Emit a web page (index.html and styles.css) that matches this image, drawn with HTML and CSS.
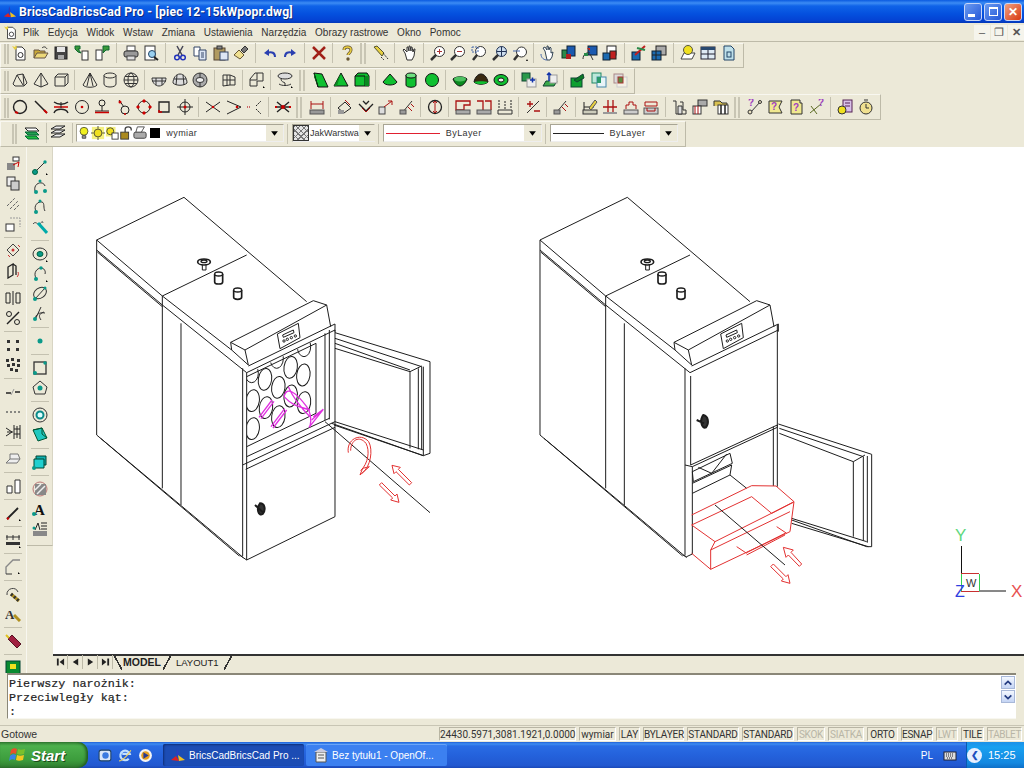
FILE: index.html
```html
<!DOCTYPE html>
<html lang="pl">
<head>
<meta charset="utf-8">
<title>BricsCad</title>
<link rel="stylesheet" href="styles.css">
</head>
<body>
<svg class="defs" xmlns="http://www.w3.org/2000/svg">
<symbol id="logo" viewBox="0 0 16 16"><path d="M7 1l2 6-3 3z" fill="#2a3fc0"/><path d="M1 13l5-4 3 5z" fill="#e02020"/><path d="M8 8l7 5-6 1z" fill="#f0c020"/></symbol>
<symbol id="new" viewBox="0 0 16 16"><path d="M4 2h6l3 3v10H4z" fill="#fff" stroke="#333"/><circle cx="8.500" cy="10" r="2.500" fill="none" stroke="#333"/><path d="M0 1l3 1 1-2 1 3-2 2z" fill="#e8d040"/></symbol>
<symbol id="open" viewBox="0 0 16 16"><path d="M1 13V5h5l1 1h5v2" fill="#c8a838" stroke="#654"/><path d="M1 13l3-5h11l-3 5z" fill="#ecd878" stroke="#654"/><path d="M9 3c2-2 4-1 5 1" fill="none" stroke="#333"/></symbol>
<symbol id="save" viewBox="0 0 16 16"><rect x="2" y="2" width="12" height="12" fill="#444" stroke="#222"/><rect x="4" y="2" width="8" height="5" fill="#e6e6e6"/><rect x="5" y="10" width="6" height="4" fill="#aaa"/></symbol>
<symbol id="tr1" viewBox="0 0 16 16"><rect x="8" y="6" width="6" height="9" fill="#fff" stroke="#333"/><path d="M1 1h5v3H4l3 4-3-1-3-3z" fill="#3a9a3a" stroke="#163"/></symbol>
<symbol id="tr2" viewBox="0 0 16 16"><rect x="2" y="5" width="6" height="10" fill="#fff" stroke="#333"/><path d="M9 1h6v4h-3l-3 3z" fill="#3a9a3a" stroke="#163"/></symbol>
<symbol id="print" viewBox="0 0 16 16"><rect x="4" y="1" width="8" height="5" fill="#fff" stroke="#444"/><rect x="1" y="6" width="14" height="6" rx="2" fill="#999" stroke="#333"/><rect x="4" y="11" width="8" height="4" fill="#ddd" stroke="#444"/></symbol>
<symbol id="prev" viewBox="0 0 16 16"><rect x="2" y="1" width="10" height="14" fill="#fff" stroke="#333"/><circle cx="9" cy="9" r="3.500" fill="#9ad0f0" stroke="#246"/><path d="M11 12l4 3" stroke="#222" stroke-width="2"/></symbol>
<symbol id="cut" viewBox="0 0 16 16"><path d="M5 1l5 9M11 1l-5 9" stroke="#445" stroke-width="1.500"/><circle cx="5" cy="12.500" r="2.300" fill="none" stroke="#23b" stroke-width="1.500"/><circle cx="11" cy="12.500" r="2.300" fill="none" stroke="#23b" stroke-width="1.500"/></symbol>
<symbol id="copy" viewBox="0 0 16 16"><path d="M2 2h6v9H2z" fill="#fff" stroke="#346"/><path d="M7 5h7v10H7z" fill="#dde6f5" stroke="#346"/><path d="M9 8h3M9 10h3M9 12h3" stroke="#346"/></symbol>
<symbol id="paste" viewBox="0 0 16 16"><rect x="1" y="3" width="11" height="12" fill="#b09a60" stroke="#543"/><rect x="4" y="1" width="5" height="3" fill="#888" stroke="#333"/><rect x="7" y="7" width="8" height="8" fill="#dde6f5" stroke="#346"/></symbol>
<symbol id="brush" viewBox="0 0 16 16"><path d="M1 10l5-5 5 5-4 4z" fill="#f0e090" stroke="#653"/><path d="M8 5l4-4 3 3-4 4z" fill="#777" stroke="#333"/></symbol>
<symbol id="undo" viewBox="0 0 16 16"><path d="M13 12c0-4-3-6-8-4" fill="none" stroke="#2a3fb0" stroke-width="2"/><path d="M7 4L2 8l5 3z" fill="#2a3fb0"/></symbol>
<symbol id="redo" viewBox="0 0 16 16"><path d="M3 12c0-4 3-6 8-4" fill="none" stroke="#2a3fb0" stroke-width="2"/><path d="M9 4l5 4-5 3z" fill="#2a3fb0"/></symbol>
<symbol id="del" viewBox="0 0 16 16"><path d="M2 2l12 12M14 2L2 14" stroke="#a02018" stroke-width="2.500"/></symbol>
<symbol id="help" viewBox="0 0 16 16"><path d="M5 5c0-4 7-4 7 0 0 3-3 3-3 5" fill="none" stroke="#653" stroke-width="3"/><path d="M5 5c0-4 7-4 7 0 0 3-3 3-3 5" fill="none" stroke="#ecd040" stroke-width="1.500"/><circle cx="9" cy="14" r="1.700" fill="#653"/></symbol>
<symbol id="pencil" viewBox="0 0 16 16"><path d="M1 2l3-1 7 7-2 3z" fill="#e8d040" stroke="#553"/><path d="M10 8l5 6M8 12l3 3" stroke="#333" stroke-dasharray="2 1"/></symbol>
<symbol id="hand" viewBox="0 0 16 16"><path d="M4 8L2 5l1-1 3 3V2h1l1 4V1h1l1 5V2h1l1 5 1-3h1l-1 7-2 4H6z" fill="#fff" stroke="#333"/></symbol>
<symbol id="zp" viewBox="0 0 16 16"><circle cx="9.500" cy="6.500" r="5" fill="#fff" stroke="#333"/><path d="M7 6.500h5M9.500 4v5" stroke="#a33"/><path d="M6 10l-5 5" stroke="#333" stroke-width="2.500"/></symbol>
<symbol id="zm" viewBox="0 0 16 16"><circle cx="9.500" cy="6.500" r="5" fill="#fff" stroke="#333"/><path d="M7 6.500h5" stroke="#a33"/><path d="M6 10l-5 5" stroke="#333" stroke-width="2.500"/></symbol>
<symbol id="zw" viewBox="0 0 16 16"><circle cx="9.500" cy="6.500" r="5" fill="#fff" stroke="#333"/><path d="M1 2h6v5H1z" fill="none" stroke="#46a" stroke-dasharray="2 1"/><path d="M6 10l-4 5" stroke="#333" stroke-width="2.500"/></symbol>
<symbol id="za" viewBox="0 0 16 16"><circle cx="9.500" cy="6.500" r="5" fill="#cde" stroke="#235"/><path d="M9.500 1.500v10M4.500 6.500h10" stroke="#235"/><path d="M6 10l-5 5" stroke="#333" stroke-width="2.500"/></symbol>
<symbol id="zb" viewBox="0 0 16 16"><circle cx="9.500" cy="7" r="5" fill="#fff" stroke="#333"/><path d="M1 6h7" stroke="#46a"/><path d="M6 10l-4 5" stroke="#333" stroke-width="2.500"/><path d="M15 14l1 2h-2z" fill="#000"/></symbol>
<symbol id="orb" viewBox="0 0 16 16"><path d="M5 6L3 3l2-1 2 3V1h1l1 4 1-3 1 1v5l2-1-1 5-2 3H7z" fill="#fff" stroke="#345"/><path d="M1 9c0 4 3 6 6 6" fill="none" stroke="#46a"/></symbol>
<symbol id="c1" viewBox="0 0 16 16"><rect x="1" y="5" width="6" height="8" fill="#2a8a4a" stroke="#132"/><rect x="6" y="1" width="8" height="10" fill="#1c5ab0" stroke="#123"/><rect x="5" y="9" width="5" height="5" fill="#b02020"/></symbol>
<symbol id="c2" viewBox="0 0 16 16"><rect x="6" y="1" width="9" height="9" fill="#1c5ab0" stroke="#123"/><path d="M5 3l3 0v3z" fill="#c02020"/><path d="M1 14c0-5 4-7 7-6M8 9l3 6" fill="none" stroke="#333"/><rect x="2" y="8" width="4" height="3" fill="#2a8a4a"/></symbol>
<symbol id="c3" viewBox="0 0 16 16"><rect x="5" y="1" width="9" height="9" fill="#fff" stroke="#222"/><rect x="1" y="8" width="7" height="7" fill="#1c6ab0" stroke="#123"/><rect x="8" y="6" width="6" height="8" fill="#c02020" stroke="#222"/></symbol>
<symbol id="c4" viewBox="0 0 16 16"><rect x="1" y="7" width="8" height="8" fill="#1c6ab0" stroke="#123"/><path d="M4 10L14 1" stroke="#c02020" stroke-width="2"/><path d="M6 3l8 2" stroke="#2a8a4a" stroke-width="2"/></symbol>
<symbol id="c5" viewBox="0 0 16 16"><rect x="5" y="1" width="10" height="9" fill="#aaa" stroke="#222"/><rect x="1" y="6" width="9" height="9" fill="#1c6ab0" stroke="#123"/><path d="M1 10h9M5 6v9" stroke="#222"/></symbol>
<symbol id="sun" viewBox="0 0 16 16"><path d="M1 14l3-6h11l-3 6z" fill="#fff" stroke="#444"/><circle cx="8" cy="5" r="4.500" fill="#f0e020" stroke="#554"/></symbol>
<symbol id="tbl" viewBox="0 0 16 16"><rect x="1" y="2" width="14" height="12" fill="#dfeaf4" stroke="#223"/><rect x="1" y="2" width="14" height="3" fill="#2a4a70"/><path d="M1 9h14M8 5v9" stroke="#223"/></symbol>
<symbol id="docb" viewBox="0 0 16 16"><path d="M3 1h7l3 3v11H3z" fill="#bfe0ea" stroke="#246"/><rect x="6" y="7" width="4" height="5" fill="none" stroke="#246"/></symbol>
<symbol id="wedge" viewBox="0 0 16 16"><path d="M1 12l4-9 6-1 4 9-3 3H3zM5 3l6 10M11 2l1 12" fill="none" stroke="#333"/></symbol>
<symbol id="pyr" viewBox="0 0 16 16"><path d="M8 1l7 11-7 3-7-3zM8 1v14" fill="none" stroke="#333"/></symbol>
<symbol id="box" viewBox="0 0 16 16"><path d="M2 5l3-3h10v9l-3 3H2zM2 5h10v9M12 5l3-3" fill="none" stroke="#333"/></symbol>
<symbol id="cone" viewBox="0 0 16 16"><path d="M8 1L1 13c2 3 12 3 14 0zM8 1L5 14M8 1l3 13" fill="none" stroke="#333"/></symbol>
<symbol id="cyl" viewBox="0 0 16 16"><ellipse cx="8" cy="3.500" rx="6" ry="2.500" fill="none" stroke="#333"/><path d="M2 3.500V12c0 4 12 4 12 0V3.500" fill="none" stroke="#333"/></symbol>
<symbol id="sph" viewBox="0 0 16 16"><circle cx="8" cy="8" r="7" fill="none" stroke="#333"/><ellipse cx="8" cy="8" rx="3" ry="7" fill="none" stroke="#333"/><path d="M1 8h14M2 4.500h12M2 11.500h12" stroke="#333"/></symbol>
<symbol id="dish" viewBox="0 0 16 16"><path d="M1 6c0 4 3 8 7 8s7-4 7-8zM5 6v7M11 6v7M1 9h14" fill="#ddd" stroke="#333"/></symbol>
<symbol id="dome" viewBox="0 0 16 16"><path d="M1 11c0-5 3-9 7-9s7 4 7 9c-3 3-11 3-14 0zM5 3l-1 10M11 3l1 10M2 7h12" fill="#ddd" stroke="#333"/></symbol>
<symbol id="tor" viewBox="0 0 16 16"><circle cx="8" cy="8" r="7" fill="#aaa" stroke="#333"/><ellipse cx="8" cy="8" rx="4" ry="2.500" fill="#eee" stroke="#333"/><path d="M8 1v4M8 11v4" stroke="#333"/></symbol>
<symbol id="mesh" viewBox="0 0 16 16"><path d="M2 3h7l5 2v8H9l-7 1zM9 3v10M2 8h12M6 3v11" fill="none" stroke="#333"/></symbol>
<symbol id="edge" viewBox="0 0 16 16"><path d="M1 14V7l5-6h8v8H8v5zM1 8h7V1" fill="none" stroke="#333"/><path d="M14 14l2 2h-2z" fill="#000"/></symbol>
<symbol id="sdl" viewBox="0 0 16 16"><ellipse cx="8" cy="4" rx="7" ry="3" fill="#ddd" stroke="#333"/><path d="M4 7c0 3 3 3 4 4v3M2 12c3 2 9 2 12 0" fill="none" stroke="#333"/><path d="M14 14l2 2h-2z" fill="#000"/></symbol>
<symbol id="gw" viewBox="0 0 16 16"><path d="M1 1l8 1 6 13H5z" fill="#0fc030" stroke="#111"/><path d="M1 1l4 14" stroke="#111"/><path d="M1 1v4l4 10z" fill="#086a1c"/></symbol>
<symbol id="gp" viewBox="0 0 16 16"><path d="M8 1l7 13H1z" fill="#0fc030" stroke="#111"/><path d="M8 1L4 14H1z" fill="#0a8a20"/></symbol>
<symbol id="gb" viewBox="0 0 16 16"><path d="M1 4l3-3h9l2 3v10H1z" fill="#0fc030" stroke="#111"/><path d="M1 4h10v10" fill="none" stroke="#111"/><path d="M11 4h4v10h-4z" fill="#0a8a20"/></symbol>
<symbol id="gc" viewBox="0 0 16 16"><path d="M8 2l7 8c-2 4-12 4-14 0z" fill="#0fc030" stroke="#111"/></symbol>
<symbol id="gy" viewBox="0 0 16 16"><path d="M3 3v10c0 3 10 3 10 0V3z" fill="#0fc030" stroke="#111"/><ellipse cx="8" cy="3.500" rx="5" ry="2.500" fill="#6fe080" stroke="#111"/></symbol>
<symbol id="gs" viewBox="0 0 16 16"><circle cx="8" cy="8" r="6.500" fill="#0fc030" stroke="#111"/></symbol>
<symbol id="gd" viewBox="0 0 16 16"><path d="M1 7c3-3 11-3 14 0-2 5-5 7-7 7S3 12 1 7z" fill="#0a8a20" stroke="#111"/><ellipse cx="8" cy="7" rx="6" ry="2.500" fill="#4ec060"/></symbol>
<symbol id="gm" viewBox="0 0 16 16"><path d="M1 10c1-5 4-8 7-8s6 3 7 8c-3 3-11 3-14 0z" fill="#3a2a10" stroke="#111"/><path d="M1 10c3 3 11 3 14 0-3-1-11-1-14 0z" fill="#0fc030"/></symbol>
<symbol id="gt" viewBox="0 0 16 16"><ellipse cx="8" cy="8" rx="7" ry="5.500" fill="#0fc030" stroke="#111"/><ellipse cx="8" cy="8" rx="3" ry="2" fill="#eee" stroke="#111"/></symbol>
<symbol id="s1" viewBox="0 0 16 16"><rect x="1" y="1" width="8" height="8" fill="#2a9a4a" stroke="#143"/><rect x="6" y="7" width="9" height="8" fill="#eee" stroke="#999"/><path d="M9 8h5M11.500 5.500v5" stroke="#13a" stroke-width="1.500"/></symbol>
<symbol id="s2" viewBox="0 0 16 16"><path d="M1 14l3-5h11l-3 5z" fill="#3aaa4a" stroke="#143"/><rect x="8" y="3" width="7" height="8" fill="#eee" stroke="#999"/><path d="M7 9V1M5 3l2-2 2 2" fill="none" stroke="#13a" stroke-width="1.500"/></symbol>
<symbol id="s3" viewBox="0 0 16 16"><rect x="1" y="6" width="11" height="9" fill="#0fa030" stroke="#143"/><path d="M4 8l9-6 1 4-7 4z" fill="#0c7a24" stroke="#143"/></symbol>
<symbol id="s4" viewBox="0 0 16 16"><rect x="1" y="1" width="9" height="10" fill="#bce8d8" stroke="#286"/><rect x="6" y="5" width="9" height="10" fill="#e8f4f8" stroke="#48a"/><path d="M6 5h4v6H6z" fill="#2a9a6a"/></symbol>
<symbol id="s5" viewBox="0 0 16 16"><rect x="2" y="2" width="9" height="9" fill="#ddd" stroke="#a88"/><rect x="5" y="5" width="10" height="10" fill="#f4f0e4" stroke="#ccc"/><rect x="6" y="5" width="5" height="6" fill="#5a8a40" stroke="#a33"/></symbol>
<symbol id="circ" viewBox="0 0 16 16"><circle cx="8" cy="8" r="6.500" fill="none" stroke="#222" stroke-width="1.400"/><path d="M3 13l3 1" stroke="#c00" stroke-width="2"/></symbol>
<symbol id="line" viewBox="0 0 16 16"><path d="M2 2l12 12" stroke="#222" stroke-width="1.500"/><path d="M11 11l3 3" stroke="#c00" stroke-width="2"/></symbol>
<symbol id="trim" viewBox="0 0 16 16"><path d="M1 3c4 3 10 3 14 0M1 14c2-5 12-5 14 0" fill="none" stroke="#222" stroke-width="1.400"/><path d="M1 8h14" stroke="#c00" stroke-width="1.500"/><path d="M8 3v6" stroke="#222"/></symbol>
<symbol id="ctr" viewBox="0 0 16 16"><circle cx="8" cy="8" r="6.500" fill="none" stroke="#222"/><circle cx="8" cy="8" r="1.300" fill="#c00"/></symbol>
<symbol id="pin" viewBox="0 0 16 16"><circle cx="8" cy="4" r="3" fill="none" stroke="#222"/><path d="M8 7v5M1 12h14" stroke="#222"/><path d="M1 13.500h14" stroke="#c00" stroke-width="1.500"/></symbol>
<symbol id="bend" viewBox="0 0 16 16"><circle cx="10" cy="11" r="4" fill="none" stroke="#222"/><path d="M4 1l5 7" stroke="#222"/><circle cx="5" cy="3" r="1.500" fill="#c00"/><circle cx="10" cy="15" r="1" fill="#c00"/></symbol>
<symbol id="qd" viewBox="0 0 16 16"><circle cx="8" cy="8" r="6" fill="none" stroke="#222"/><path d="M7 1h2v2H7zM7 13h2v2H7zM1 7h2v2H1zM13 7h2v2h-2z" fill="#d00" stroke="#c00"/></symbol>
<symbol id="rc" viewBox="0 0 16 16"><path d="M3 3h10v10H3z" fill="none" stroke="#222" stroke-width="1.300"/><path d="M3 11v2h3" fill="none" stroke="#c00" stroke-width="1.500"/></symbol>
<symbol id="cx" viewBox="0 0 16 16"><circle cx="8" cy="8" r="5" fill="none" stroke="#222"/><path d="M8 0v16M0 8h16" stroke="#222"/><circle cx="8" cy="8" r="1.500" fill="#c00"/></symbol>
<symbol id="xl" viewBox="0 0 16 16"><path d="M1 3l14 10M1 13L15 3" stroke="#222"/><circle cx="8" cy="8" r="1.300" fill="#c00"/></symbol>
<symbol id="yl" viewBox="0 0 16 16"><path d="M1 2l14 6L1 15" fill="none" stroke="#222"/><circle cx="11" cy="8" r="1.300" fill="#c00"/></symbol>
<symbol id="dl" viewBox="0 0 16 16"><path d="M10 7l5-5M10 10l5 5" stroke="#222" stroke-dasharray="2 1"/><path d="M1 8h3" stroke="#c66" stroke-dasharray="1 1" stroke-width="2"/></symbol>
<symbol id="star" viewBox="0 0 16 16"><path d="M2 3l12 10M14 3L2 13M1 8h14" stroke="#222" stroke-width="1.400"/><circle cx="8" cy="8" r="2" fill="#c00"/><path d="M0 8h2M14 8h2" stroke="#c00" stroke-width="2"/></symbol>
<symbol id="d1" viewBox="0 0 16 16"><rect x="1" y="11" width="14" height="4" fill="#999" stroke="#555"/><path d="M2 2v8M14 2v8M2 5h12" stroke="#a11"/></symbol>
<symbol id="d2" viewBox="0 0 16 16"><path d="M1 9l7-6 6 6-7 5z" fill="none" stroke="#222"/><rect x="1" y="11" width="6" height="4" fill="#999"/><path d="M8 1l5 5" stroke="#a11"/></symbol>
<symbol id="d3" viewBox="0 0 16 16"><path d="M1 5l7 7 7-7M5 2l3 3 3-3" fill="none" stroke="#222" stroke-width="1.300"/><path d="M4 9l4 4 4-4" fill="none" stroke="#a11"/></symbol>
<symbol id="d4" viewBox="0 0 16 16"><rect x="1" y="8" width="6" height="7" fill="#ddd" stroke="#444"/><path d="M6 8l8-6M10 2h4v4" fill="none" stroke="#a11"/></symbol>
<symbol id="d5" viewBox="0 0 16 16"><path d="M3 14L13 2" stroke="#333"/><rect x="1" y="11" width="6" height="4" fill="#999" stroke="#555"/><path d="M9 8l4 4M12 5l3 3" stroke="#a11"/></symbol>
<symbol id="d6" viewBox="0 0 16 16"><circle cx="8" cy="8" r="6.500" fill="none" stroke="#222" stroke-width="1.300"/><path d="M8 2v12M6 4l2-2 2 2M6 12l2 2 2-2" fill="none" stroke="#a11"/></symbol>
<symbol id="d7" viewBox="0 0 16 16"><path d="M1 2h14v4h-6v5H1z" fill="none" stroke="#a11" stroke-width="1.300"/><rect x="1" y="11" width="14" height="4" fill="#aaa" stroke="#555"/></symbol>
<symbol id="d8" viewBox="0 0 16 16"><path d="M1 2h6v9M9 2h6v9" fill="none" stroke="#a11" stroke-width="1.300"/><rect x="1" y="11" width="14" height="4" fill="#aaa" stroke="#555"/></symbol>
<symbol id="d9" viewBox="0 0 16 16"><path d="M2 1v9M14 1v9M8 2v8" stroke="#222" stroke-dasharray="2 1"/><path d="M1 11h14v4H1z" fill="none" stroke="#333"/></symbol>
<symbol id="pm" viewBox="0 0 16 16"><path d="M2 14L14 2" stroke="#333"/><path d="M2 5h6M5 2v6M9 12h6" stroke="#a11" stroke-width="1.300"/></symbol>
<symbol id="e1" viewBox="0 0 16 16"><rect x="1" y="11" width="14" height="4" fill="#ccb" stroke="#333"/><path d="M2 3v8M2 8h10" stroke="#222"/><path d="M7 9l6-8 2 2-6 8z" fill="#e8d040" stroke="#555"/></symbol>
<symbol id="e2" viewBox="0 0 16 16"><path d="M6 1v14M11 1v14M1 8h14" stroke="#a11" stroke-width="1.300"/><rect x="1" y="13" width="14" height="2" fill="#999"/></symbol>
<symbol id="e3" viewBox="0 0 16 16"><path d="M3 10V6h3V3h4v3h3v4" fill="none" stroke="#a11"/><rect x="1" y="11" width="14" height="4" fill="#ccc" stroke="#555"/></symbol>
<symbol id="e4" viewBox="0 0 16 16"><path d="M2 3h12v4H2z" fill="none" stroke="#a11"/><rect x="1" y="9" width="14" height="6" fill="#ccc" stroke="#555"/><path d="M4 9v3h8V9" fill="none" stroke="#a11"/></symbol>
<symbol id="e5" viewBox="0 0 16 16"><path d="M1 2h3v13h10v-4h-3V3H8" fill="none" stroke="#333"/><path d="M6 7h4v8H6z" fill="#ddd" stroke="#333"/></symbol>
<symbol id="e6" viewBox="0 0 16 16"><rect x="6" y="1" width="9" height="6" fill="#aaa" stroke="#333"/><rect x="1" y="7" width="8" height="8" fill="#fff" stroke="#333"/><path d="M3 7v8M6 7v8" stroke="#a11"/></symbol>
<symbol id="e7" viewBox="0 0 16 16"><path d="M1 7V2h6l2 2h5v2" fill="#d8c050" stroke="#333"/><rect x="5" y="6" width="10" height="9" fill="#fff" stroke="#333"/><path d="M8 6v9M12 6v9" stroke="#222" stroke-width="1.500"/></symbol>
<symbol id="q1" viewBox="0 0 16 16"><path d="M3 14L14 2" stroke="#333"/><circle cx="3" cy="13" r="2" fill="#e8e0c0" stroke="#333"/><circle cx="13" cy="3" r="1.500" fill="#e8e0c0" stroke="#333"/><text x="1" y="7" class="qm">?</text></symbol>
<symbol id="q2" viewBox="0 0 16 16"><path d="M1 2h13l-3 6 3 6H1z" fill="#f0e890" stroke="#333"/><text x="3" y="11" class="qm">?</text></symbol>
<symbol id="q3" viewBox="0 0 16 16"><path d="M3 1h9v3h2v11H3z" fill="#f0e890" stroke="#333"/><text x="5" y="12" class="qm">?</text></symbol>
<symbol id="q4" viewBox="0 0 16 16"><path d="M1 14L12 5M2 7l6 8" stroke="#5a6a20"/><text x="9" y="7" class="qm">?</text></symbol>
<symbol id="q5" viewBox="0 0 16 16"><rect x="6" y="1" width="9" height="12" fill="#d8c0e8" stroke="#525"/><path d="M8 4h5M8 7h5" stroke="#525"/><circle cx="5" cy="11" r="4" fill="#f0e020" stroke="#333"/></symbol>
<symbol id="q6" viewBox="0 0 16 16"><circle cx="8" cy="9" r="6" fill="#f0e090" stroke="#333"/><path d="M8 5v4h3M6 1h4" fill="none" stroke="#333"/></symbol>
<symbol id="lay1" viewBox="0 0 16 16"><path d="M1 3h11l3 3H4z" fill="#fff" stroke="#222"/><path d="M1 7h11l3 3H4z" fill="#22a050" stroke="#063"/><path d="M1 11h11l3 3H4z" fill="#20c040" stroke="#063"/></symbol>
<symbol id="lay2" viewBox="0 0 16 16"><path d="M1 4l5-3h9l-5 3zM1 8l5-3h9l-5 3zM1 12l5-3h9l-5 3z" fill="#eee" stroke="#222"/></symbol>
<symbol id="bulb" viewBox="0 0 16 16"><circle cx="8" cy="6" r="4.500" fill="#f0f020" stroke="#553"/><path d="M6 11h4v3H6z" fill="#999" stroke="#444"/></symbol>
<symbol id="sun2" viewBox="0 0 16 16"><rect x="1" y="1" width="14" height="14" fill="#f4f080"/><circle cx="8" cy="8" r="4.500" fill="#f0e020" stroke="#443"/><path d="M8 0v3M8 13v3M0 8h3M13 8h3" stroke="#443"/></symbol>
<symbol id="sun3" viewBox="0 0 16 16"><rect x="1" y="1" width="11" height="11" fill="#f4f080"/><circle cx="6" cy="6" r="4" fill="#f0e020" stroke="#443"/><rect x="8" y="8" width="7" height="7" fill="#fff" stroke="#333"/></symbol>
<symbol id="lock" viewBox="0 0 16 16"><path d="M7 7V4c0-4 7-4 7 0v1" fill="none" stroke="#444" stroke-width="1.500"/><rect x="2" y="7" width="9" height="8" fill="#aa8a20" stroke="#333"/></symbol>
<symbol id="prn2" viewBox="0 0 16 16"><path d="M5 1h8L9 8H3z" fill="#fff" stroke="#444"/><rect x="1" y="7" width="14" height="7" rx="2" fill="#aaa" stroke="#333"/></symbol>
<symbol id="a1" viewBox="0 0 16 16"><rect x="8" y="1" width="6" height="4" fill="#fff" stroke="#333"/><g fill="#888"><rect x="2" y="7" width="8" height="7"/></g><path d="M8 9l6-3-1 5" fill="none" stroke="#c00"/></symbol>
<symbol id="a2" viewBox="0 0 16 16"><rect x="2" y="1" width="8" height="9" fill="#eee" stroke="#333"/><rect x="6" y="5" width="8" height="9" fill="#ccc" stroke="#333"/></symbol>
<symbol id="a3" viewBox="0 0 16 16"><path d="M2 10L10 2M5 13l8-8M9 14l5-5" stroke="#666" stroke-dasharray="3 1"/></symbol>
<symbol id="a4" viewBox="0 0 16 16"><rect x="1" y="8" width="8" height="7" fill="#fff" stroke="#333"/><path d="M5 2h10v9" fill="none" stroke="#999" stroke-dasharray="2 1"/></symbol>
<symbol id="a5" viewBox="0 0 16 16"><path d="M8 1l6 6-6 6-6-6z" fill="none" stroke="#444"/><circle cx="8" cy="7" r="1.500" fill="#c33"/><path d="M3 12l2 2M13 2l2 2" stroke="#c33"/></symbol>
<symbol id="a6" viewBox="0 0 16 16"><path d="M3 4l5-3v11l-5 3zM8 1l3 2v9" fill="none" stroke="#222" stroke-width="1.300"/><path d="M13 9c1 2 0 4-1 5" fill="none" stroke="#c33"/></symbol>
<symbol id="a7" viewBox="0 0 16 16"><path d="M1 3h4v10H1zM11 3h4v10h-4zM8 1v14" fill="none" stroke="#222"/></symbol>
<symbol id="a8" viewBox="0 0 16 16"><path d="M2 14L14 2" stroke="#222" stroke-width="1.400"/><circle cx="4" cy="4" r="2.500" fill="none" stroke="#222"/><circle cx="12" cy="12" r="2.500" fill="none" stroke="#222"/></symbol>
<symbol id="a9" viewBox="0 0 16 16"><g fill="#333"><rect x="2" y="3" width="3" height="3"/><rect x="11" y="3" width="3" height="3"/><rect x="2" y="11" width="3" height="3"/><rect x="11" y="11" width="3" height="3"/></g></symbol>
<symbol id="a10" viewBox="0 0 16 16"><g fill="#333"><rect x="1" y="2" width="3" height="3"/><rect x="6" y="1" width="3" height="3"/><rect x="12" y="2" width="3" height="3"/><rect x="2" y="7" width="3" height="3"/><rect x="7" y="6" width="3" height="3"/><rect x="12" y="7" width="3" height="3"/><rect x="5" y="11" width="3" height="3"/><rect x="10" y="12" width="3" height="3"/></g></symbol>
<symbol id="a11" viewBox="0 0 16 16"><path d="M1 9h5M10 8h5" stroke="#222" stroke-width="1.500"/><path d="M6 11l3-6" stroke="#999"/></symbol>
<symbol id="a12" viewBox="0 0 16 16"><g fill="#666"><circle cx="2" cy="8" r="1"/><circle cx="6" cy="8" r="1"/><circle cx="10" cy="8" r="1"/><circle cx="14" cy="8" r="1"/></g></symbol>
<symbol id="a13" viewBox="0 0 16 16"><path d="M1 4l6 4-6 4M2 8h6M9 1v14M12 2v12M15 1v14M9 5h6M9 10h6" fill="none" stroke="#222"/></symbol>
<symbol id="a14" viewBox="0 0 16 16"><path d="M1 12l4-4h10l-3 4zM5 8V3h8l2 5" fill="#eee" stroke="#777"/></symbol>
<symbol id="a15" viewBox="0 0 16 16"><path d="M2 8h5v7H2zM10 2h5v13h-5z" fill="#fff" stroke="#333"/></symbol>
<symbol id="a16" viewBox="0 0 16 16"><path d="M2 14L13 3" stroke="#222" stroke-width="1.800"/><path d="M2 14l2-1" stroke="#c00" stroke-width="2"/><path d="M14 14l2 2h-2z" fill="#000"/></symbol>
<symbol id="a17" viewBox="0 0 16 16"><path d="M1 5h14M2 3v5M14 3v5M8 3v5" stroke="#333"/><rect x="1" y="10" width="14" height="3" fill="#333"/><path d="M14 14l2 2h-2z" fill="#000"/></symbol>
<symbol id="a18" viewBox="0 0 16 16"><path d="M1 15V8l7-7h7" fill="none" stroke="#888" stroke-width="1.400"/><path d="M1 15h6" stroke="#333"/><path d="M13 13l2 2h-2z" fill="#000"/></symbol>
<symbol id="a19" viewBox="0 0 16 16"><path d="M2 9c-1-7 9-9 11-3" fill="none" stroke="#444"/><path d="M6 8l8 7" stroke="#b09020" stroke-width="3"/><path d="M6 8l8 7" stroke="#333" stroke-dasharray="2 2" stroke-width="3"/></symbol>
<symbol id="a20" viewBox="0 0 16 16"><text x="0" y="13" class="aa">A</text><path d="M9 9l6 6" stroke="#b09020" stroke-width="3"/></symbol>
<symbol id="a21" viewBox="0 0 16 16"><path d="M3 6l4-4 9 9-4 4z" fill="#a02040" stroke="#512"/><path d="M1 2l3 3" stroke="#e0c020" stroke-width="2"/></symbol>
<symbol id="a22" viewBox="0 0 16 16"><rect x="1" y="1" width="14" height="14" fill="#0a8a30" stroke="#043"/><rect x="5" y="4" width="6" height="5" fill="#f0e020"/></symbol>
<symbol id="t1" viewBox="0 0 16 16"><path d="M2 14L14 2" stroke="#333"/><circle cx="3" cy="13" r="2.500" fill="#0a9a8a" stroke="#064"/><circle cx="13" cy="3" r="1.700" fill="#0a9a8a"/><path d="M14 14l2 2h-2z" fill="#000"/></symbol>
<symbol id="t2" viewBox="0 0 16 16"><path d="M3 12C1 4 11 1 13 7" fill="none" stroke="#333"/><circle cx="4" cy="13" r="2" fill="#0a9a8a"/><circle cx="13" cy="12" r="2" fill="#0a9a8a"/><circle cx="8" cy="2" r="1.500" fill="#0a9a8a"/></symbol>
<symbol id="t3" viewBox="0 0 16 16"><path d="M4 12C1 7 6 2 10 3c3 1 1 6 3 9" fill="none" stroke="#333"/><circle cx="4" cy="13" r="2" fill="#0a9a8a"/><circle cx="8" cy="2" r="1.500" fill="#0a9a8a"/></symbol>
<symbol id="t4" viewBox="0 0 16 16"><path d="M1 5c3-4 5 2 7 0s2-4 3-1" fill="none" stroke="#555"/><path d="M6 4l9 10" stroke="#0aa" stroke-width="3"/></symbol>
<symbol id="t5" viewBox="0 0 16 16"><ellipse cx="8" cy="8" rx="7" ry="6" fill="none" stroke="#333"/><ellipse cx="8" cy="8" rx="3" ry="2.500" fill="#0a9a8a" stroke="#064"/><path d="M14 14l2 2h-2z" fill="#000"/></symbol>
<symbol id="t6" viewBox="0 0 16 16"><path d="M4 12C1 7 5 2 9 2c3 0 5 3 4 6" fill="none" stroke="#333"/><circle cx="4" cy="13" r="2" fill="#0a9a8a"/><circle cx="9" cy="2" r="1.700" fill="#0a9a8a"/><path d="M14 14l2 2h-2z" fill="#000"/></symbol>
<symbol id="t7" viewBox="0 0 16 16"><ellipse cx="8" cy="7" rx="7" ry="5" fill="none" stroke="#333" transform="rotate(-35 8 7)"/><path d="M3 13l10-11" stroke="#333"/><circle cx="3" cy="13" r="2" fill="#0a9a8a"/><circle cx="13" cy="2" r="1.500" fill="#0a9a8a"/></symbol>
<symbol id="t8" viewBox="0 0 16 16"><path d="M3 14L9 1M3 14c0-6 5-8 10-7M9 14c-2-3-3-6 3-8" fill="none" stroke="#333"/><circle cx="3" cy="13" r="2" fill="#0a9a8a"/></symbol>
<symbol id="t9" viewBox="0 0 16 16"><circle cx="8" cy="8" r="2.500" fill="#0a9a8a"/></symbol>
<symbol id="t10" viewBox="0 0 16 16"><rect x="2" y="2" width="12" height="12" fill="none" stroke="#333" stroke-width="1.300"/><circle cx="3" cy="13" r="2" fill="#0a9a8a"/><circle cx="13" cy="3" r="1.700" fill="#0a9a8a"/></symbol>
<symbol id="t11" viewBox="0 0 16 16"><path d="M8 1l7 6-2 7H3L1 7z" fill="none" stroke="#333"/><circle cx="8" cy="8" r="2.500" fill="#0a9a8a"/></symbol>
<symbol id="t12" viewBox="0 0 16 16"><circle cx="8" cy="8" r="7" fill="none" stroke="#333"/><circle cx="8" cy="8" r="3.500" fill="#dff" stroke="#0a8a8a" stroke-width="2"/></symbol>
<symbol id="t13" viewBox="0 0 16 16"><path d="M1 3l9-2 5 10-9 3z" fill="#20c8c0" stroke="#053"/><path d="M1 3l9-2v6l5 4" fill="none" stroke="#053"/></symbol>
<symbol id="t14" viewBox="0 0 16 16"><path d="M4 2h10v9H4z" fill="#10b0b0" stroke="#043"/><path d="M2 5h10v9H2z" fill="#20d0d0" stroke="#043"/><circle cx="2" cy="14" r="2" fill="#0a9a8a"/></symbol>
<symbol id="t15" viewBox="0 0 16 16"><circle cx="8" cy="8" r="7" fill="none" stroke="#b77"/><path d="M3 3h11v11H3z" fill="#888"/><path d="M3 9l6-6M5 13l8-8" stroke="#eee" stroke-width="1.500"/></symbol>
<symbol id="t16" viewBox="0 0 16 16"><text x="2" y="14" class="ab">A</text><circle cx="2" cy="13" r="2" fill="#0a9a8a"/></symbol>
<symbol id="t17" viewBox="0 0 16 16"><rect x="1" y="10" width="14" height="5" fill="#888"/><path d="M9 2h6M9 5h6M9 8h6" stroke="#222"/><path d="M3 9l3-7 2 7" fill="none" stroke="#222"/><circle cx="2" cy="7" r="1.500" fill="#0a9a8a"/></symbol>
<symbol id="tf" viewBox="0 0 8 8"><path d="M1 2h6L4 6z" fill="#000"/></symbol>
<symbol id="navf" viewBox="0 0 10 10"><path d="M1 1h2v8H1zM9 1v8L4 5z" fill="#222"/></symbol>
<symbol id="navp" viewBox="0 0 10 10"><path d="M8 1v8L2 5z" fill="#222"/></symbol>
<symbol id="navn" viewBox="0 0 10 10"><path d="M2 1v8l6-4z" fill="#222"/></symbol>
<symbol id="navl" viewBox="0 0 10 10"><path d="M7 1h2v8H7zM1 1v8l5-4z" fill="#222"/></symbol>
<symbol id="up" viewBox="0 0 12 12"><path d="M2 8l4-4 4 4" fill="none" stroke="#223a80" stroke-width="2"/></symbol>
<symbol id="dn" viewBox="0 0 12 12"><path d="M2 4l4 4 4-4" fill="none" stroke="#223a80" stroke-width="2"/></symbol>
</svg>

<header class="title">
  <svg class="title-logo"><use href="#logo"/></svg>
  <span class="title-text">BricsCadBricsCad Pro - [piec 12-15kWpopr.dwg]</span>
  <span class="winbtns">
    <span class="wb"><span class="wb-min"></span></span>
    <span class="wb"><span class="wb-res"></span></span>
    <span class="wb wb-close">✕</span>
  </span>
</header>

<nav class="menu">
  <svg class="menu-logo"><use href="#new"/></svg>
  <span>Plik</span><span>Edycja</span><span>Widok</span><span>Wstaw</span><span>Zmiana</span><span>Ustawienia</span><span>Narzędzia</span><span>Obrazy rastrowe</span><span>Okno</span><span>Pomoc</span>
  <span class="mdi"><i class="mdi-b">–</i><i class="mdi-b">❐</i><i class="mdi-b mdi-x">✕</i></span>
</nav>

<section class="bars">
  <div class="row row1"><div class="tb">
    <b class="h0"></b>
    <svg class="i"><use href="#new"/></svg><svg class="i"><use href="#open"/></svg><svg class="i"><use href="#save"/></svg><svg class="i"><use href="#tr1"/></svg><svg class="i"><use href="#tr2"/></svg><b class="s"></b>
    <svg class="i"><use href="#print"/></svg><svg class="i"><use href="#prev"/></svg><b class="s"></b>
    <svg class="i"><use href="#cut"/></svg><svg class="i"><use href="#copy"/></svg><svg class="i"><use href="#paste"/></svg><svg class="i"><use href="#brush"/></svg><b class="s"></b>
    <svg class="i"><use href="#undo"/></svg><svg class="i"><use href="#redo"/></svg><b class="s"></b>
    <svg class="i"><use href="#del"/></svg><b class="s"></b>
    <svg class="i"><use href="#help"/></svg><b class="h"></b>
    <svg class="i"><use href="#pencil"/></svg><b class="s"></b>
    <svg class="i"><use href="#hand"/></svg><b class="s"></b>
    <svg class="i"><use href="#zp"/></svg><svg class="i"><use href="#zm"/></svg><svg class="i"><use href="#zw"/></svg><svg class="i"><use href="#za"/></svg><svg class="i"><use href="#zb"/></svg><b class="s"></b>
    <svg class="i"><use href="#orb"/></svg><svg class="i"><use href="#c1"/></svg><svg class="i"><use href="#c2"/></svg><svg class="i"><use href="#c3"/></svg><b class="s"></b>
    <svg class="i"><use href="#c4"/></svg><svg class="i"><use href="#c5"/></svg><b class="s"></b>
    <svg class="i"><use href="#sun"/></svg><svg class="i"><use href="#tbl"/></svg><svg class="i"><use href="#docb"/></svg>
  </div></div>
  <div class="row row2"><div class="tb">
    <b class="h0"></b>
    <svg class="i"><use href="#wedge"/></svg><svg class="i"><use href="#pyr"/></svg><svg class="i"><use href="#box"/></svg><b class="s"></b>
    <svg class="i"><use href="#cone"/></svg><svg class="i"><use href="#cyl"/></svg><svg class="i"><use href="#sph"/></svg><b class="s"></b>
    <svg class="i"><use href="#dish"/></svg><svg class="i"><use href="#dome"/></svg><svg class="i"><use href="#tor"/></svg><b class="s"></b>
    <svg class="i"><use href="#mesh"/></svg><b class="s"></b>
    <svg class="i"><use href="#edge"/></svg><b class="s"></b>
    <svg class="i"><use href="#sdl"/></svg><b class="h h2"></b>
    <svg class="i"><use href="#gw"/></svg><svg class="i"><use href="#gp"/></svg><svg class="i"><use href="#gb"/></svg><b class="s"></b>
    <svg class="i"><use href="#gc"/></svg><svg class="i"><use href="#gy"/></svg><svg class="i"><use href="#gs"/></svg><b class="s"></b>
    <svg class="i"><use href="#gd"/></svg><svg class="i"><use href="#gm"/></svg><svg class="i"><use href="#gt"/></svg><b class="s"></b>
    <svg class="i"><use href="#s1"/></svg><svg class="i"><use href="#s2"/></svg><b class="s"></b>
    <svg class="i"><use href="#s3"/></svg><svg class="i"><use href="#s4"/></svg><svg class="i"><use href="#s5"/></svg>
  </div></div>
  <div class="row row3"><div class="tb">
    <b class="h0"></b>
    <svg class="i"><use href="#circ"/></svg><svg class="i"><use href="#line"/></svg><svg class="i"><use href="#trim"/></svg><svg class="i"><use href="#ctr"/></svg><svg class="i"><use href="#pin"/></svg><svg class="i"><use href="#bend"/></svg><svg class="i"><use href="#qd"/></svg><svg class="i"><use href="#rc"/></svg><svg class="i"><use href="#cx"/></svg><b class="s"></b>
    <svg class="i"><use href="#xl"/></svg><svg class="i"><use href="#yl"/></svg><svg class="i"><use href="#dl"/></svg><b class="s"></b>
    <svg class="i"><use href="#star"/></svg><b class="h"></b>
    <svg class="i"><use href="#d1"/></svg><b class="s"></b>
    <svg class="i"><use href="#d2"/></svg><svg class="i"><use href="#d3"/></svg><svg class="i"><use href="#d4"/></svg><svg class="i"><use href="#d5"/></svg><b class="s"></b>
    <svg class="i"><use href="#d6"/></svg><b class="s"></b>
    <svg class="i"><use href="#d7"/></svg><svg class="i"><use href="#d8"/></svg><svg class="i"><use href="#d9"/></svg><b class="s"></b>
    <svg class="i"><use href="#pm"/></svg><b class="s"></b>
    <svg class="i"><use href="#d5"/></svg><b class="s"></b>
    <svg class="i"><use href="#e1"/></svg><svg class="i"><use href="#e2"/></svg><svg class="i"><use href="#e3"/></svg><svg class="i"><use href="#e4"/></svg><b class="s"></b>
    <svg class="i"><use href="#e5"/></svg><svg class="i"><use href="#e6"/></svg><svg class="i"><use href="#e7"/></svg><b class="h"></b>
    <svg class="i"><use href="#q1"/></svg><svg class="i"><use href="#q2"/></svg><svg class="i"><use href="#q3"/></svg><svg class="i"><use href="#q4"/></svg><b class="s"></b>
    <svg class="i"><use href="#q5"/></svg><svg class="i"><use href="#q6"/></svg>
  </div></div>
  <div class="row row4"><div class="tb tb-props">
    <b class="h-lay"></b>
    <svg class="i"><use href="#lay1"/></svg><b class="s s-small"></b>
    <svg class="i"><use href="#lay2"/></svg><b class="s"></b>
    <div class="combo c-layer">
      <svg class="ci"><use href="#bulb"/></svg><svg class="ci"><use href="#sun2"/></svg><svg class="ci"><use href="#sun3"/></svg><svg class="ci"><use href="#lock"/></svg><svg class="ci"><use href="#prn2"/></svg>
      <span class="swatch"></span><span class="ctext">wymiar</span><span class="arrow"><svg class="tf"><use href="#tf"/></svg></span>
    </div>
    <b class="s s-c"></b>
    <div class="combo c-hatch"><span class="hatch"></span><span class="ctext ctext-j">JakWarstwa</span><span class="arrow"><svg class="tf"><use href="#tf"/></svg></span></div>
    <b class="s s-c"></b>
    <div class="combo c-line"><span class="ln ln-red"></span><span class="ctext">ByLayer</span><span class="arrow"><svg class="tf"><use href="#tf"/></svg></span></div>
    <b class="s s-c"></b>
    <div class="combo c-line2"><span class="ln ln-blk"></span><span class="ctext">ByLayer</span><span class="arrow"><svg class="tf"><use href="#tf"/></svg></span></div>
  </div></div>
</section>

<main class="main">
  <aside class="side">
    <div class="col col1">
      <svg class="v"><use href="#a1"/></svg><svg class="v"><use href="#a2"/></svg><svg class="v"><use href="#a3"/></svg><svg class="v"><use href="#a4"/></svg><b class="vs"></b>
      <svg class="v"><use href="#a5"/></svg><svg class="v"><use href="#a6"/></svg><b class="vs"></b>
      <svg class="v"><use href="#a7"/></svg><svg class="v"><use href="#a8"/></svg><b class="vs"></b>
      <svg class="v"><use href="#a9"/></svg><svg class="v"><use href="#a10"/></svg><b class="vs"></b>
      <svg class="v"><use href="#a11"/></svg><svg class="v"><use href="#a12"/></svg><svg class="v"><use href="#a13"/></svg><b class="vs"></b>
      <svg class="v"><use href="#a14"/></svg><b class="vs"></b>
      <svg class="v"><use href="#a15"/></svg><b class="vs"></b>
      <svg class="v"><use href="#a16"/></svg><b class="vs"></b>
      <svg class="v"><use href="#a17"/></svg><b class="vs"></b>
      <svg class="v"><use href="#a18"/></svg><b class="vs"></b>
      <svg class="v"><use href="#a19"/></svg><svg class="v"><use href="#a20"/></svg><b class="vs"></b>
      <svg class="v"><use href="#a21"/></svg><b class="vs"></b>
      <svg class="v"><use href="#a22"/></svg>
    </div>
    <div class="col col2">
      <svg class="v"><use href="#t1"/></svg><svg class="v"><use href="#t2"/></svg><svg class="v"><use href="#t3"/></svg><svg class="v"><use href="#t4"/></svg><b class="vs"></b>
      <svg class="v"><use href="#t5"/></svg><svg class="v"><use href="#t6"/></svg><svg class="v"><use href="#t7"/></svg><svg class="v"><use href="#t8"/></svg><b class="vs"></b>
      <svg class="v"><use href="#t9"/></svg><b class="vs"></b>
      <svg class="v"><use href="#t10"/></svg><svg class="v"><use href="#t11"/></svg><b class="vs"></b>
      <svg class="v"><use href="#t12"/></svg><svg class="v"><use href="#t13"/></svg><b class="vs"></b>
      <svg class="v"><use href="#t14"/></svg><b class="vs"></b>
      <svg class="v"><use href="#t15"/></svg><svg class="v"><use href="#t16"/></svg><svg class="v"><use href="#t17"/></svg>
    </div>
  </aside>
  <div class="work">
    <div class="canvas">
      <svg class="draw" viewBox="53 147 971 507" xmlns="http://www.w3.org/2000/svg">
        <defs>
          <g id="base" class="dk">
            <path d="M50 150L312 22L680 335M247 318L500 195M50 150L247 318L455 480M50 180L247 345L500 548M52 186L247 350"/>
            <path d="M50 150V735M247 318V895M303 400V945M50 735L478 1098M62 745L490 1103"/>
            <path d="M452 457L700 332L740 345L752 410M452 457L455 480L505 525L495 480L452 457M495 480L740 345M505 528L765 402M500 548L765 420M765 402V425"/>
            <path d="M592 432L655 400L660 443L600 476ZM608 435L640 420L642 428L610 442Z"/>
            <circle cx="612" cy="453" r="3.500"/><circle cx="622" cy="448" r="3.500"/><circle cx="634" cy="443" r="3.500"/><circle cx="646" cy="438" r="3.500"/>
            <ellipse cx="372" cy="216" rx="19" ry="9" class="med"/><ellipse cx="372" cy="214" rx="9" ry="4" class="sol"/><path d="M367 225V240H378V225"/>
            <path class="med" d="M404 252V276C404 284 428 284 428 276V252"/><ellipse cx="416" cy="252" rx="12" ry="6" class="sol"/>
            <path class="med" d="M461 300V322C461 330 485 330 485 322V300"/><ellipse cx="473" cy="300" rx="12" ry="6" class="sol"/>
          </g>
          <clipPath id="win"><path d="M500 553L708 450V668L500 770Z"/></clipPath>
        </defs>

        <g transform="translate(80 190) scale(.33333)">
          <use href="#base"/>
          <g class="dk">
            <path d="M488 535V1098M500 548V1110M500 1110L765 980V420M478 1095L500 1110"/>
            <path d="M488 825L765 695M497 838L765 712M500 800L748 685M500 770L708 670M500 560L708 460"/>
            <path d="M708 460V670M735 430V690M748 420V688"/>
            <g clip-path="url(#win)">
              <ellipse cx="555" cy="568" rx="20" ry="33" transform="rotate(8 555 568)"/><ellipse cx="595" cy="592" rx="20" ry="33" transform="rotate(8 595 592)"/><ellipse cx="632" cy="532" rx="20" ry="33" transform="rotate(8 632 532)"/><ellipse cx="670" cy="555" rx="20" ry="33" transform="rotate(8 670 555)"/><ellipse cx="518" cy="632" rx="20" ry="33" transform="rotate(8 518 632)"/><ellipse cx="558" cy="653" rx="20" ry="33" transform="rotate(8 558 653)"/><ellipse cx="595" cy="680" rx="20" ry="33" transform="rotate(8 595 680)"/><ellipse cx="632" cy="618" rx="20" ry="33" transform="rotate(8 632 618)"/><ellipse cx="672" cy="638" rx="20" ry="33" transform="rotate(8 672 638)"/><ellipse cx="518" cy="716" rx="20" ry="33" transform="rotate(8 518 716)"/><ellipse cx="672" cy="470" rx="20" ry="30"/><ellipse cx="590" cy="505" rx="20" ry="30"/><ellipse cx="515" cy="550" rx="20" ry="28"/>
            </g>
            <path d="M765 428L1050 515V790L1030 797L755 700M765 445L1025 530M765 460L990 540M765 475L990 545M990 545V775M1025 530V780M1015 535V778M990 545L1025 528M1030 530V797M765 695L1030 780M762 705L1030 797"/>
            <path d="M735 695L1050 968"/>
            <path d="M525 945L550 968M540 940C555 940 558 960 548 972C535 980 528 955 540 940Z" class="thick"/>
          </g>
          <g class="mag">
            <path d="M537 682L576 630M543 686L582 634M573 710L614 656M579 714L620 660"/>
            <path d="M612 620C620 585 650 610 680 650C692 668 695 690 690 710M625 590C640 625 660 650 690 680M612 620C640 650 660 650 690 660"/>
            <path d="M687 712L730 658L700 680M730 658L695 690"/>
          </g>
          <g class="red">
            <path d="M805 788C798 750 840 725 866 755C880 780 872 830 846 850M812 782C812 750 838 735 858 760C870 782 865 820 842 842"/>
            <path d="M840 855L868 830L848 835Z"/>
            <path d="M898 885L905 878L945 918L951 912L957 937L932 930L938 924Z"/>
            <path d="M995 878L988 885L948 845L942 851L936 826L961 832L955 838Z"/>
          </g>
        </g>

        <g transform="translate(530 190) scale(.33333)">
          <use href="#base" transform="translate(-20 0)"/>
          <g class="dk">
            <path d="M465 535V1095M482 558V825M487 830V1092M465 825L487 830L742 712M482 825L742 705M742 405V710M458 1095L470 1100L487 1092"/>
            <path d="M500 690L522 700M520 675C535 678 538 700 528 712C515 718 508 690 520 675Z" class="thick"/>
            <path d="M487 845L600 790L607 820L490 875ZM505 832L545 850L590 792M487 880L605 825L600 855L487 910M600 855L650 895"/>
            <path d="M730 710V888M742 705V890M745 702L1025 793V1070L1010 1070L785 990M748 715L1000 800M748 730L970 815M970 815V1040M1000 800V1052M1012 798V1058M970 815L1005 795M785 1000L1015 1070M785 985L1010 1055"/>
          </g>
          <g class="red">
            <path d="M485 975L665 887L738 888L792 935L780 1025L542 1138L485 1090M485 1005L665 920L725 970L792 935M485 1005L555 1055L790 937M555 1055L542 1080V1138M542 1080L780 965M650 1095L765 1035M650 1088L765 1030M620 1070L650 1090M740 1010L770 1030"/>
            <path d="M815 1122L808 1129L775 1095L768 1102L760 1072L790 1080L783 1087Z"/>
            <path d="M722 1130L730 1122L768 1160L774 1154L780 1180L754 1173L760 1167Z"/>
          </g>
          <path class="dk" d="M555 945L765 1125"/>
        </g>

        <g class="ucs">
          <path class="ucs-k" d="M961.500 546V574M979 591H1006"/>
          <path class="ucs-g" d="M961.500 574V591M979.500 574V591"/>
          <path class="ucs-r" d="M961 573.500H979M961 591.500H979"/>
          <text x="955" y="541" class="t-y">Y</text>
          <text x="1011" y="597" class="t-x">X</text>
          <text x="955" y="597" class="t-z">Z</text>
          <text x="966" y="587" class="t-w">W</text>
        </g>
      </svg>
    </div>
    <div class="tabs">
      <span class="nav"><svg class="navi"><use href="#navf"/></svg></span><span class="nav"><svg class="navi"><use href="#navp"/></svg></span><span class="nav"><svg class="navi"><use href="#navn"/></svg></span><span class="nav"><svg class="navi"><use href="#navl"/></svg></span>
      <span class="sl sl-b"></span><span class="tab-model">MODEL</span><span class="sl"></span><span class="tab-lay">LAYOUT1</span><span class="sl"></span>
    </div>
  </div>
</main>

<section class="cmdwrap">
  <div class="cmd">
    <div class="cmd-text">Pierwszy narożnik:<br>Przeciwległy kąt:<br>:</div>
    <div class="scroll"><span class="sb"><svg class="sbi"><use href="#up"/></svg></span><span class="sb"><svg class="sbi"><use href="#dn"/></svg></span></div>
  </div>
</section>

<footer class="status">
  <span class="ready">Gotowe</span>
  <span class="panels">
    <span class="p w137">24430.5971,3081.1921,0.0000</span><span class="p w37">wymiar</span><span class="p w21">LAY</span><span class="p w41">BYLAYER</span><span class="p w52">STANDARD</span><span class="p w52">STANDARD</span><span class="p w28 off">SKOK</span><span class="p w36 off">SIATKA</span><span class="p w31">ORTO</span><span class="p w32">ESNAP</span><span class="p w22 off">LWT</span><span class="p w23">TILE</span><span class="p w35 off">TABLET</span>
  </span>
</footer>

<footer class="taskbar">
  <div class="start">
    <svg class="flag" viewBox="0 0 18 18"><path d="M2 4c2-2 4-2 6-1l-1 5c-2-1-4-1-6 1z" fill="#e8502a"/><path d="M9 3c2 1 4 1 7 0l-1 5c-3 1-5 1-7 0z" fill="#7ac02c"/><path d="M1 10c2-2 4-2 6-1l-1 5c-2-1-4-1-6 1z" fill="#3a82e8"/><path d="M8 9c2 1 4 1 7 0l-1 5c-3 1-5 1-7 0z" fill="#f4c820"/></svg>
    <span class="start-t">Start</span>
  </div>
  <div class="quick">
    <svg class="q" viewBox="0 0 14 14"><rect x="1" y="2" width="11" height="10" rx="2" fill="#d8e6f8" stroke="#246"/><circle cx="7" cy="7" r="3" fill="#3a7ae0"/></svg>
    <svg class="q" viewBox="0 0 14 14"><path d="M10 10A4.500 4.500 0 1 1 11 5.500H4" fill="none" stroke="#bfe0ff" stroke-width="2"/><path d="M1 12C4 12 10 6 12 2" fill="none" stroke="#f0d060"/></svg>
    <svg class="q" viewBox="0 0 14 14"><circle cx="7" cy="7" r="6" fill="#f4f4f4"/><circle cx="7" cy="7" r="4" fill="#e8a020"/><path d="M5 4l5 3-5 3z" fill="#2a3a90"/></svg>
  </div>
  <div class="tbtn tbtn-on"><svg class="tb-i"><use href="#logo"/></svg><span>BricsCadBricsCad Pro ...</span></div>
  <div class="tbtn"><svg class="tb-i" viewBox="0 0 16 16"><path d="M3 5h10v10H3z" fill="#eee" stroke="#555"/><path d="M1 5l7-4 7 4z" fill="#ccd"/><path d="M5 8h6M5 11h6" stroke="#555"/></svg><span>Bez tytułu1 - OpenOf...</span></div>
  <div class="tray-l">PL</div>
  <svg class="kbd" viewBox="0 0 14 12"><rect x="1" y="3" width="12" height="8" fill="#ddd" stroke="#223"/><path d="M3 5h8M3 7h8M4 9h6" stroke="#223" stroke-dasharray="1 1"/></svg>
  <div class="tray"><span class="chev">❮</span><span class="clock">15:25</span></div>
</footer>
</body>
</html>
```
FILE: styles.css
```css
*{box-sizing:border-box}
html,body{margin:0;padding:0}
body{width:1024px;height:768px;overflow:hidden;background:#ece9d8;font-family:"Liberation Sans",Arial,sans-serif;color:#222;display:flex;flex-direction:column}
.defs{display:none}
.qm{font:bold 10px "Liberation Sans",sans-serif;fill:#a040c0}
.aa{font:bold 13px "Liberation Serif",serif;fill:#333}
.ab{font:bold 15px "Liberation Serif",serif;fill:#111}

.title{height:23px;flex:none;display:flex;align-items:center;padding-left:3px;background:linear-gradient(#0a5ae0 0,#3c8cf4 3px,#0f63e8 6px,#0450de 14px,#0443d4 20px,#0338b8 100%)}
.title-logo{width:14px;height:14px;margin-right:2px}
.title-text{color:#fff;font:bold 12.200px Roboto,"Liberation Sans",sans-serif;letter-spacing:.2px;text-shadow:1px 1px #0a2a80;white-space:nowrap}
.winbtns{margin-left:auto;display:flex;gap:2px;padding-right:2px}
.wb{width:18px;height:18px;border:1px solid #c8d6f8;border-radius:3px;background:linear-gradient(135deg,#6a9af0,#2458d8);display:flex;align-items:center;justify-content:center;color:#fff}
.wb-min{width:7px;height:3px;background:#fff;margin-top:7px;margin-right:3px}
.wb-res{width:9px;height:9px;border:1px solid #fff;border-top-width:2px}
.wb-close{background:linear-gradient(135deg,#f0a080,#d83810);font-size:12px;font-weight:bold}

.menu{height:19px;flex:none;display:flex;align-items:center;gap:8.700px;font-size:10px;color:#333;border-bottom:1px solid #bdbaa8;padding-left:4px}
.menu-logo{width:14px;height:15px;margin-right:-3.700px}
.mdi{margin-left:auto;display:flex;gap:1px;padding-right:0}
.mdi-b{width:16px;height:15px;font-style:normal;text-align:center;font-size:11px;line-height:15px;background:#f5f4ec;color:#555}
.mdi-x{font-weight:bold}

.bars{flex:none}
.row{height:26px;display:flex;align-items:stretch}
.row1{height:26px;padding-top:1px}
.row2{height:26px}
.row3{height:26px}
.row4{height:27px;padding-top:1px}
.tb{display:flex;align-items:flex-start;padding-right:4px;border-bottom:1px solid #bdbaa8;border-right:1px solid #bdbaa8;border-top:1px solid #f8f7f0;border-left:1px solid #f8f7f0}
.row1 .tb{padding-top:1px}
.row2 .tb{padding-top:3px}
.row3 .tb{padding-top:4px}
.row4 .tb{padding-top:3px}
.tb-props{padding-right:7px}
.i{width:16px;height:16px;margin:0 2.300px;flex:none}
.h0{width:8.700px;height:20px;flex:none;margin-top:-1px;background:linear-gradient(90deg,transparent 3px,#c8c5b4 3px,#c8c5b4 5px,transparent 5px,transparent 6px,#c8c5b4 6px,#c8c5b4 8px,transparent 8px)}
.s{width:7.750px;height:20px;flex:none;margin-top:-2px;background:linear-gradient(90deg,transparent 3px,#c4c1b0 3px,#c4c1b0 4px,transparent 4px)}
.h{width:13.450px;height:21px;flex:none;margin-top:-2px;background:linear-gradient(90deg,transparent 3px,#c8c5b4 3px,#c8c5b4 5px,transparent 5px,transparent 7px,#c8c5b4 7px,#c8c5b4 9px,transparent 9px)}
.h2{width:15px}
.h-lay{width:21px;height:20px;flex:none;margin-top:-1px;background:linear-gradient(90deg,transparent 11px,#c8c5b4 11px,#c8c5b4 13px,transparent 13px,transparent 14px,#c8c5b4 14px,#c8c5b4 16px,transparent 16px)}
.s-small{width:5.400px}
.s-c{margin-top:-1px}
.combo{height:18px;flex:none;display:flex;align-items:center;background:#fff;border:1px solid #a8a594;border-right-color:#eee;border-bottom-color:#eee;font-size:9px;color:#333;margin-top:-1px}
.c-layer{width:208px;padding-left:0}
.c-hatch{width:83px}
.c-line{width:159px}
.c-line2{width:128px}
.ci{width:14px;height:14px;flex:none}
.swatch{width:10px;height:10px;background:#000;margin-left:3px;flex:none}
.ctext{margin-left:6px;letter-spacing:.4px;white-space:nowrap}
.ctext-j{margin-left:1px;letter-spacing:0}
.arrow{margin-left:auto;width:17px;height:16px;background:#ece9d8;display:flex;align-items:center;justify-content:center;flex:none}
.tf{width:9px;height:9px}
.hatch{width:16px;height:16px;flex:none;background:repeating-linear-gradient(45deg,transparent 0,transparent 3px,#777 3px,#777 4px),repeating-linear-gradient(-45deg,#e4e4e4 0,#e4e4e4 3px,#777 3px,#777 4px);border:1px solid #333}
.ln{height:1px;flex:none;margin-left:2px}
.ln-red{width:54px;background:#e02030}
.ln-blk{width:51px;background:#222}

.main{height:526px;flex:none;display:flex;overflow:hidden}
.side{width:53px;flex:none;display:flex;align-items:flex-start;overflow:hidden;height:526px}
.col{display:flex;flex-direction:column;align-items:center;width:26px;flex:none}
.col1{padding-top:7px;width:27px;border-right:1px solid #f8f7f0;height:526px}
.col2{padding-top:10px;padding-bottom:6px;border-bottom:1px solid #bdbaa8;border-right:1px solid #d8d5c4}
.v{width:16px;height:16px;margin:2px 0;flex:none}
.vs{width:18px;height:7px;flex:none;background:linear-gradient(transparent 3px,#c4c1b0 3px,#c4c1b0 4px,transparent 4px)}
.work{flex:1;display:flex;flex-direction:column;min-width:0}
.canvas{height:507px;background:#fff;flex:none}
.draw{display:block;width:971px;height:507px}
.dk,.dk path,.dk ellipse,.dk circle{fill:none;stroke:#1c1c1c;stroke-width:3}
.dk .sol{fill:#fff;stroke-width:4}
.dk .med{stroke-width:5}
.dk .thick{stroke-width:6;fill:#333}
.mag path{fill:none;stroke:#e030e0;stroke-width:4}
.red path{fill:none;stroke:#e23030;stroke-width:3}
.ucs path{fill:none;stroke-width:1}
.ucs-k{stroke:#111}
.ucs-r{stroke:#c83030}
.ucs-g{stroke:#30d050}
.t-y{font:17px "Liberation Sans",sans-serif;fill:#60d880}
.t-x{font:17px "Liberation Sans",sans-serif;fill:#e85050}
.t-z{font:16px "Liberation Sans",sans-serif;fill:#3040e0}
.t-w{font:11px "Liberation Sans",sans-serif;fill:#333}

.tabs{height:19px;flex:none;border-top:2px solid #333;display:flex;align-items:center;padding-bottom:5px;font-size:10px;color:#222}
.nav{width:15px;height:14px;display:flex;align-items:center;justify-content:center;border-right:1px solid #bdbaa8;flex:none}
.navi{width:9px;height:10px}
.sl{width:8px;height:15px;flex:none;background:linear-gradient(to top left,transparent 44%,#333 44%,#333 56%,transparent 56%)}
.sl-b{background:linear-gradient(to top right,transparent 44%,#333 44%,#333 56%,transparent 56%);margin-left:1px}
.tab-model{font-weight:bold;font-size:10.500px;margin:0 2px 0 1px}
.tab-lay{font-size:9.500px;margin:0 5px}

.cmdwrap{height:53px;flex:none;padding-left:7px;padding-right:8px;padding-bottom:6px;border-bottom:1px solid #c8c5b4}
.cmd{height:46px;background:#fff;border-top:2px solid #8a8778;border-left:1px solid #8a8778;border-bottom:1px solid #f8f7f0;display:flex}
.cmd-text{flex:1;font:11.750px/14px "Liberation Mono",monospace;padding:2px 0 0 1px;color:#222;-webkit-text-stroke:.2px #222}
.scroll{width:14px;flex:none;margin-right:1px;padding-top:1px;display:flex;flex-direction:column;gap:1px}
.sb{height:13px;background:linear-gradient(#f4f8ff,#c4d4f4);border:1px solid #a8b8d8;display:flex;align-items:center;justify-content:center}
.sbi{width:10px;height:10px}

.status{height:16px;flex:none;display:flex;align-items:center;font-size:10.500px;color:#333;overflow:hidden}
.ready{padding-left:1px;flex:none;font-size:10.500px}
.panels{margin-left:auto;display:flex;gap:3px;padding-right:2px;font:10px Roboto,"Liberation Sans",sans-serif}
.p{height:14px;line-height:13px;text-align:center;white-space:nowrap;border:1px solid;border-color:#b8b5a4 #fff #fff #b8b5a4;flex:none}
.off{color:#b8b5a6}
.w137{width:137px}.w37{width:37px}.w21{width:21px}.w41{width:41px;letter-spacing:-.2px}.w52{width:52px;letter-spacing:-.2px}.w28{width:28px;letter-spacing:-.3px}.w36{width:36px;letter-spacing:-.2px}.w31{width:31px;letter-spacing:-.2px}.w32{width:32px;letter-spacing:-.3px}.w22{width:22px;letter-spacing:-.3px}.w23{width:23px;letter-spacing:-.2px}.w35{width:35px;letter-spacing:-.4px}

.taskbar{height:26px;flex:none;display:flex;align-items:center;background:linear-gradient(#1f60d8 0,#3f8cf0 2px,#2a6ce4 4px,#2462dc 50%,#2258d0 90%,#1a48b8 100%);color:#fff;font-size:11px}
.start{width:88px;height:26px;flex:none;display:flex;align-items:center;padding-left:9px;background:linear-gradient(#3a8a3a,#4cb04c 15%,#3c9c3c 70%,#2f7a2f);border-radius:0 10px 10px 0;box-shadow:inset -2px 0 3px #205a20}
.flag{width:18px;height:18px;flex:none}
.start-t{font:italic bold 15px "Liberation Sans",sans-serif;margin-left:4px;text-shadow:1px 1px #1a4a1a}
.quick{width:75px;flex:none;display:flex;gap:5px;padding-left:10px}
.q{width:15px;height:15px;flex:none}
.tbtn{width:141px;height:22px;flex:none;display:flex;align-items:center;gap:3px;padding-left:7px;border-radius:2px;background:#3c80f0;margin-right:2px;white-space:nowrap;overflow:hidden;font-size:10px;box-shadow:inset 0 1px #6aa4f8}
.tbtn-on{background:#1c4cb4;box-shadow:inset 1px 1px 2px #0f2e78}
.tb-i{width:16px;height:16px;flex:none}
.tray-l{margin-left:auto;font-size:10px;padding-right:10px}
.kbd{width:14px;height:12px;margin-right:9px;flex:none}
.tray{width:58px;height:26px;flex:none;display:flex;align-items:center;background:linear-gradient(#1c90e8,#18a0f0 20%,#1488e0 80%,#0e70c8);border-left:1px solid #0a5ab0;font-size:11px}
.chev{width:15px;height:15px;border-radius:50%;background:#e8f0ff;color:#2050c0;font-size:9px;line-height:15px;text-align:center;font-weight:bold;flex:none}
.clock{margin-left:6px}
```
